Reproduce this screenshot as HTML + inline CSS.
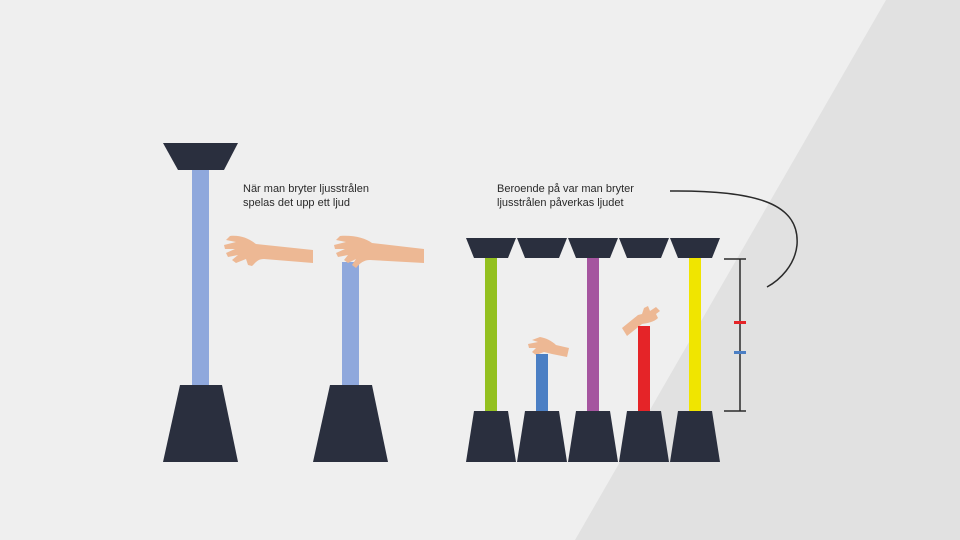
<!DOCTYPE html>
<html><head><style>body{margin:0;background:#efefef}svg{display:block}text{font-family:"Liberation Sans",sans-serif;font-size:11px;fill:#2a2a2a}</style></head>
<body><svg width="960" height="540" viewBox="0 0 960 540">
<rect width="960" height="540" fill="#efefef"/>
<polygon points="886,0 960,0 960,540 575,540" fill="#e1e1e1"/>
<g fill="#2a2f3e">
<polygon points="163,143 238,143 224,170 178,170"/>
<polygon points="180,385 222,385 238,462 163,462"/>
<polygon points="330,385 372,385 388,462 313,462"/>
</g>
<rect x="192" y="170" width="17" height="215" fill="#8fa8dc"/>
<rect x="342" y="262" width="17" height="123" fill="#8fa8dc"/>
<g fill="#edb894">
<path d="M313,250 L256,244 C248,238 240,235 230,236 L226,240 L236,242 L224,245 L225,249 L235,249 L226,253 L228,257 L238,255 L232,260 L236,263 L246,259 L248,265 L252,266 C256,262 258,259 264,259 L313,263 Z"/>
<path d="M424,249 L372,243 C365,238 354,235 340,236 L336,240 L346,242 L334,245 L335,249 L345,249 L336,253 L338,257 L348,255 L344,260 L348,263 L356,259 L352,265 L356,268 C360,263 364,260 370,260 L424,263 Z"/>
<path d="M569,348 L556,345 C552,341 546,338 540,337 L532,340 L538,342 L528,344 L529,348 L536,348 L532,352 L536,355 L544,352 L552,354 L567,357 Z"/>
<path d="M627,336 L642,324 C648,323 654,322 658,318 L656,314 L660,311 L656,307 L650,311 L648,306 L644,308 L642,314 L638,315 L622,328 Z"/>
</g>
<g fill="#2a2f3e">
<polygon points="466,238 516,238 508,258 474,258"/>
<polygon points="517,238 567,238 559,258 525,258"/>
<polygon points="568,238 618,238 610,258 576,258"/>
<polygon points="619,238 669,238 661,258 627,258"/>
<polygon points="670,238 720,238 712,258 678,258"/>
<polygon points="474,411 508,411 516,462 466,462"/>
<polygon points="525,411 559,411 567,462 517,462"/>
<polygon points="576,411 610,411 618,462 568,462"/>
<polygon points="627,411 661,411 669,462 619,462"/>
<polygon points="678,411 712,411 720,462 670,462"/>
</g>
<rect x="485" y="258" width="12" height="153" fill="#93c01f"/>
<rect x="536" y="354" width="12" height="57" fill="#4b7fc4"/>
<rect x="587" y="258" width="12" height="153" fill="#a5559f"/>
<rect x="638" y="326" width="12" height="85" fill="#e52428"/>
<rect x="689" y="258" width="12" height="153" fill="#f0e500"/>
<g stroke="#2a2a2a" stroke-width="1.5" fill="none">
<line x1="740" y1="259" x2="740" y2="411"/>
<line x1="724" y1="259" x2="746" y2="259"/>
<line x1="724" y1="411" x2="746" y2="411"/>
<path d="M670,191 C760,190 800,205 797,245 C795,265 780,280 767,287"/>
</g>
<rect x="734" y="321" width="12" height="3" fill="#e52428"/>
<rect x="734" y="351" width="12" height="3" fill="#4b7fc4"/>
<text x="243" y="192">När man bryter ljusstrålen</text>
<text x="243" y="206">spelas det upp ett ljud</text>
<text x="497" y="192">Beroende på var man bryter</text>
<text x="497" y="206">ljusstrålen påverkas ljudet</text>
</svg></body></html>
